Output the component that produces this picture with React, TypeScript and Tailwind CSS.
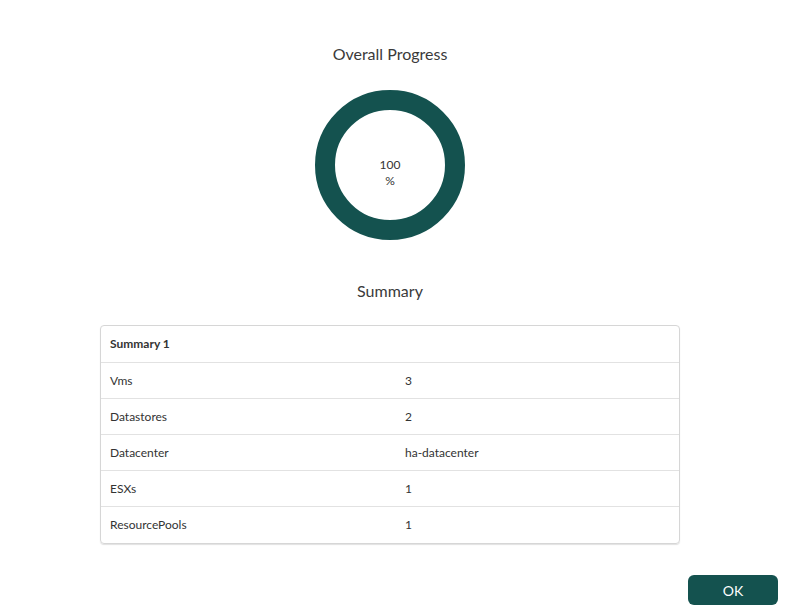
const rows: [string, string][] = [
  ["Vms", "3"],
  ["Datastores", "2"],
  ["Datacenter", "ha-datacenter"],
  ["ESXs", "1"],
  ["ResourcePools", "1"],
]

export default function App() {
  return (
    <div
      className="relative w-[790px] h-[614px] bg-white text-[#333333] overflow-hidden"
      style={{ fontFamily: "Lato, 'Open Sans', sans-serif" }}
    >
      <div className="w-[780px] flex flex-col items-center pt-[44px]">
        <h2 className="text-[16px] leading-[20px] text-[#3a3a3a]">Overall Progress</h2>

        <div className="mt-[26px] w-[150px] h-[150px] rounded-full border-[20px] border-[#14524f] flex flex-col items-center justify-center pt-[16px]">
          <span className="text-[12px] leading-[16px]">100</span>
          <span className="text-[12px] leading-[16px]">%</span>
        </div>

        <h2 className="mt-[41px] text-[16px] leading-[20px] text-[#3a3a3a]">Summary</h2>

        <div className="mt-[24px] w-[580px] border border-[#d6d6d6] rounded-[4px] shadow-[0_1px_1px_rgba(0,0,0,0.12)]">
          <div className="h-[37px] flex items-center px-[9px] text-[12px] font-bold border-b border-[#e2e2e2]">
            Summary 1
          </div>
          {rows.map(([k, v], i) => (
            <div
              key={k}
              className={`h-[36px] flex items-center text-[12px] ${
                i < rows.length - 1 ? "border-b border-[#e2e2e2]" : ""
              }`}
            >
              <div className="w-1/2 px-[9px]">{k}</div>
              <div className="w-1/2 pl-[15px]">{v}</div>
            </div>
          ))}
        </div>
      </div>

      <div className="absolute right-[12px] top-[575px]">
        <button className="w-[90px] h-[30px] rounded-[6px] bg-[#14524f] text-white text-[14px]">
          OK
        </button>
      </div>
    </div>
  )
}
